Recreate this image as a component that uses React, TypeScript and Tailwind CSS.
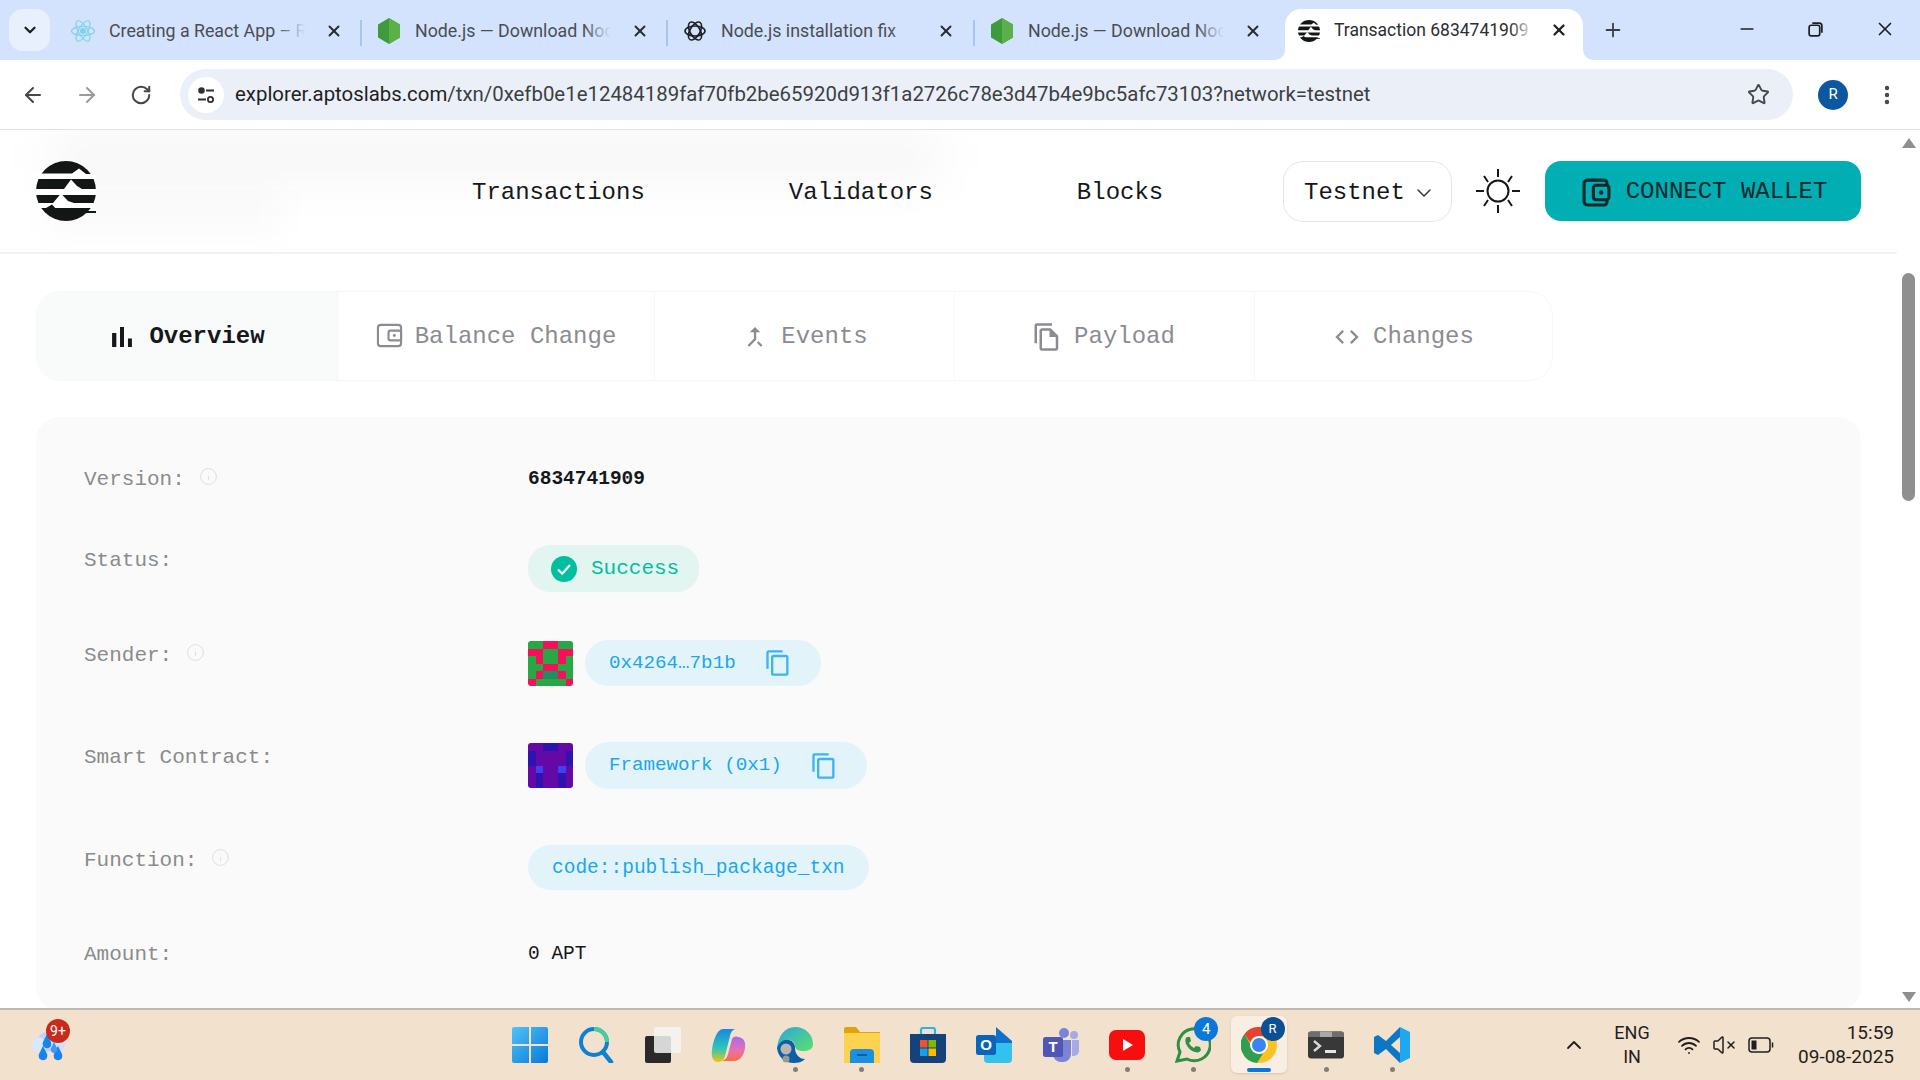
import React from 'react';
import { ArrowLeft, ArrowRight, RotateCw, Star, X, Plus, Minus, ChevronDown, ChevronUp, Info, EllipsisVertical, Wifi, VolumeX } from 'lucide-react';

const chromeFont = "font-['Roboto',sans-serif]";
const monoFont = "font-['Liberation_Mono',monospace]";

const AptosLogo = ({ className }: { className?: string }) => (
  <svg viewBox="0 0 60 60" className={className}>
    <circle cx="30" cy="30" r="30" fill="#121614" />
    <path d="M0 12.5H36L43 7.5L50 13H60V18H0z" fill="#fff" />
    <path d="M0 28H28L35 18.5L41 25L46 28H60V34H0z" fill="#fff" />
    <path d="M0 42H17L25 32.5L32 40L38 42H60V47H0z" fill="#fff" />
    <path d="M10 47L16 43.5L22 50H60V52H10z" fill="#121614" />
  </svg>
);

const NodeIcon = () => (
  <svg viewBox="0 0 24 26" className="h-[26px] w-6">
    <path d="M12 0l11 6.5v13L12 26 1 19.5v-13z" fill="#3f9a3c" />
    <path d="M12 0l11 6.5v13L12 26z" fill="#5cb04a" />
  </svg>
);

const ReactIcon = () => (
  <svg viewBox="0 0 26 26" className="h-[26px] w-[26px]" fill="none" stroke="#7fd3ea" strokeWidth="1.2">
    <ellipse cx="13" cy="13" rx="11.5" ry="4.5" />
    <ellipse cx="13" cy="13" rx="11.5" ry="4.5" transform="rotate(60 13 13)" />
    <ellipse cx="13" cy="13" rx="11.5" ry="4.5" transform="rotate(120 13 13)" />
    <circle cx="13" cy="13" r="2.4" fill="#7fd3ea" />
  </svg>
);

const GptIcon = () => (
  <svg viewBox="0 0 24 24" className="h-6 w-6" fill="none" stroke="#1f1f1f" strokeWidth="1.6">
    <ellipse cx="12" cy="12" rx="10" ry="5" />
    <ellipse cx="12" cy="12" rx="10" ry="5" transform="rotate(60 12 12)" />
    <ellipse cx="12" cy="12" rx="10" ry="5" transform="rotate(120 12 12)" />
  </svg>
);

const browserTabs = [
  { title: 'Creating a React App – React', icon: <ReactIcon />, w: 'w-[306px]', sep: true },
  { title: 'Node.js — Download Node.js', icon: <NodeIcon />, w: 'w-[306px]', sep: true },
  { title: 'Node.js installation fix', icon: <GptIcon />, w: 'w-[307px]', sep: true },
  { title: 'Node.js — Download Node.js', icon: <NodeIcon />, w: 'w-[310px]', sep: false },
];

const BrowserTab = ({ title, icon, w, sep }: { title: string; icon: React.ReactNode; w: string; sep: boolean }) => (
  <div className={`relative flex h-[44px] items-center pl-[14px] ${w}`}>
    <div className="flex w-[26px] shrink-0 justify-center">{icon}</div>
    <div className="relative ml-[13px] w-[196px] overflow-hidden whitespace-nowrap text-[17.8px] text-[#4a4d52]">
      {title}
      <div className="absolute inset-y-0 right-0 w-7 bg-gradient-to-r from-transparent to-[#d3e3fd]" />
    </div>
    <X size={18} strokeWidth={2.6} className="absolute left-[269px] text-[#2a2c30]" />
    {sep && <div className="absolute right-0 top-[11px] h-[26px] w-[2px] bg-[#a9c4ee]" />}
  </div>
);

const TabStrip = () => (
  <div className={`flex h-[60px] bg-[#d3e3fd] ${chromeFont}`}>
    <div className="ml-[9px] mt-[9px] flex h-[42px] w-[41px] items-center justify-center rounded-[14px] bg-[#e9f0fd]">
      <ChevronDown size={18} strokeWidth={3} className="text-[#1f1f1f]" />
    </div>
    <div className="ml-[6px] mt-[9px] flex">
      {browserTabs.map((t, i) => (
        <BrowserTab key={i} {...t} />
      ))}
    </div>
    <div className="relative mt-[9px] flex h-[51px] w-[298px] items-center rounded-t-[16px] bg-white pb-[8px] pl-[13px]">
      <svg viewBox="0 0 10 10" className="absolute bottom-0 left-[-10px] h-[10px] w-[10px]"><path d="M10 0V10H0A10 10 0 0 0 10 0z" fill="#fff" /></svg>
      <svg viewBox="0 0 10 10" className="absolute bottom-0 right-[-10px] h-[10px] w-[10px]"><path d="M0 0V10H10A10 10 0 0 1 0 0z" fill="#fff" /></svg>
      <AptosLogo className="h-[22px] w-[22px]" />
      <div className="relative ml-[14px] w-[200px] overflow-hidden whitespace-nowrap text-[17.5px] text-[#2c2e31]">
        Transaction 6834741909 (
        <div className="absolute inset-y-0 right-0 w-6 bg-gradient-to-r from-transparent to-white" />
      </div>
      <X size={18} strokeWidth={3} className="absolute left-[265px] top-[12px] text-[#1f1f1f]" />
    </div>
    <div className="ml-[19px] flex h-[60px] items-center">
      <Plus size={22} strokeWidth={2} className="text-[#3c3f43]" />
    </div>
    <div className="ml-auto flex h-[60px] items-center gap-[50px] pb-[2px] pr-[24px] text-[#1f1f1f]">
      <Minus size={20} strokeWidth={2} />
      <svg viewBox="0 0 16 16" className="h-[17px] w-[17px]" fill="none" stroke="#1f1f1f" strokeWidth="1.6">
        <rect x="2" y="4" width="10" height="10" rx="2" />
        <path d="M5 2h6.5A2.5 2.5 0 0 1 14 4.5V11" />
      </svg>
      <X size={22} strokeWidth={1.8} />
    </div>
  </div>
);

const Toolbar = () => (
  <div className={`flex h-[70px] items-center border-b border-[#e2e2e2] bg-white ${chromeFont}`}>
    <ArrowLeft size={24} strokeWidth={2} className="ml-[21px] text-[#474747]" />
    <ArrowRight size={24} strokeWidth={2} className="ml-[30px] text-[#9a9a9a]" />
    <RotateCw size={22} strokeWidth={2.2} className="ml-[31px] text-[#474747]" />
    <div className="ml-[28px] flex h-[51px] w-[1613px] items-center rounded-full bg-[#ebf0f8] pl-[8px]">
      <div className="flex h-9 w-9 items-center justify-center rounded-full bg-white">
        <svg viewBox="0 0 20 20" className="h-5 w-5" fill="none" stroke="#303030" strokeWidth="1.8">
          <circle cx="5.5" cy="5.5" r="2.4" fill="#303030" />
          <path d="M10 5.5h8M2 14.5h8" />
          <circle cx="14.5" cy="14.5" r="2.6" />
        </svg>
      </div>
      <span className="ml-[11px] whitespace-nowrap text-[20.4px] text-[#3c3f43]">
        <span className="text-[#1f1f1f]">explorer.aptoslabs.com</span>
        /txn/0xefb0e1e12484189faf70fb2be65920d913f1a2726c78e3d47b4e9bc5afc73103?network=testnet
      </span>
      <Star size={23} strokeWidth={2} className="ml-auto mr-[23px] text-[#474747]" />
    </div>
    <div className="ml-[25px] flex h-[30px] w-[30px] items-center justify-center rounded-full bg-[#0b57a0] text-[15px] text-white">R</div>
    <EllipsisVertical size={24} strokeWidth={2.4} className="ml-[27px] text-[#474747]" />
  </div>
);

const WalletIcon = () => (
  <svg viewBox="0 0 28 28" className="h-[29px] w-[29px]" fill="none" stroke="#05282b" strokeWidth="3">
    <path d="M24 7V4.5A2.5 2.5 0 0 0 21.5 2H5a3 3 0 0 0-3 3v18a3 3 0 0 0 3 3h16.5a2.5 2.5 0 0 0 2.5-2.5V21" />
    <rect x="11" y="7" width="15" height="14" rx="2.5" />
    <circle cx="18.5" cy="14" r="2.2" fill="#05282b" stroke="none" />
  </svg>
);

const SunIcon = () => (
  <svg viewBox="0 0 46 46" className="h-[46px] w-[46px]" fill="none" stroke="#14181b" strokeWidth="2">
    <circle cx="23" cy="23" r="10.5" />
    <path d="M23 1v8M23 37v8M1 23h8M37 23h8M9 8l4 6M37 8l-4 6M9 38l4-6M37 38l-4-6" />
  </svg>
);

const Navbar = () => (
  <div className={`relative flex h-[124px] items-center border-b-2 border-[#f1f1f1] pl-9 pr-[36px] text-[24px] text-[#14181b] ${monoFont}`}>
    {/* blurred leftovers behind the header */}
    <div className="pointer-events-none absolute left-[50px] top-[8px] h-[38px] w-[890px] bg-black/[0.045] blur-xl" />
    <div className="pointer-events-none absolute left-[50px] top-[60px] h-[45px] w-[230px] bg-black/[0.02] blur-lg" />
    <AptosLogo className="relative h-[60px] w-[60px] shrink-0" />
    <div className="relative ml-[376px] flex gap-[144px] pt-[3px]">
      <span>Transactions</span>
      <span>Validators</span>
      <span>Blocks</span>
    </div>
    <div className="relative ml-auto flex items-center">
      <div className="flex h-[61px] w-[169px] items-center rounded-[20px] border border-[#e6e6e6] pl-[20px] pt-[3px]">
        Testnet
        <ChevronDown size={24} strokeWidth={1.5} className="ml-[7px] text-[#33383b]" />
      </div>
      <div className="ml-[23px]">
        <SunIcon />
      </div>
      <div className="ml-[24px] flex h-[60px] w-[316px] items-center justify-center gap-[15px] rounded-2xl bg-[#00aeb3] pl-[3px] pt-[2px] text-[#05282b]">
        <WalletIcon />
        CONNECT WALLET
      </div>
    </div>
  </div>
);

const tabIcons: Record<string, string> = {
  bar: 'M5 9.2h3V19H5zM10.6 5h2.8v14h-2.8zm5.6 8H19v6h-2.8z',
  merge: 'M17 20.41 18.41 19 15 15.59 13.59 17 17 20.41zM7.5 8H11v5.59L5.59 19 7 20.41l6-6V8h3.5L12 3.5 7.5 8z',
  file: 'M16 1H4c-1.1 0-2 .9-2 2v14h2V3h12V1zm-1 4H8c-1.1 0-1.99.9-1.99 2L6 21c0 1.1.89 2 1.99 2H19c1.1 0 2-.9 2-2V11l-6-6zM8 21V7h6v5h5v9H8z',
  code: 'M9.4 16.6 4.8 12l4.6-4.6L8 6l-6 6 6 6 1.4-1.4zm5.2 0 4.6-4.6-4.6-4.6L16 6l6 6-6 6-1.4-1.4z',
};

const TabIcon = ({ d, className }: { d: string; className?: string }) => (
  <svg viewBox="0 0 24 24" className={className} fill="currentColor">
    <path d={d} />
  </svg>
);

const PageTabs = () => (
  <div className={`ml-9 mt-[37px] flex h-[90px] w-[1517px] rounded-3xl border border-[#f7f7f7] text-[24px] text-[#8b8b93] ${monoFont}`}>
    <div className="flex w-[300px] items-center justify-center gap-[10px] rounded-l-3xl bg-[#f9fafa] pr-[4px] pt-[2px] font-bold text-[#14181b]">
      <TabIcon d={tabIcons.bar} className="h-[34px] w-[34px]" />
      Overview
    </div>
    <div className="flex w-[317px] items-center justify-center gap-[12px] border-l border-[#f7f7f7] pt-[2px]">
      <svg viewBox="0 0 28 28" className="mb-[3px] h-[27px] w-[27px]" fill="none" stroke="currentColor" strokeWidth="2.2">
        <rect x="2" y="3" width="24" height="22" rx="3" />
        <rect x="13" y="9" width="13" height="10" rx="2" />
        <circle cx="19" cy="14" r="1.5" fill="currentColor" stroke="none" />
      </svg>
      Balance Change
    </div>
    <div className="flex w-[301px] items-center justify-center gap-[12px] border-x border-[#f7f7f7] pt-[2px]">
      <TabIcon d={tabIcons.merge} className="h-[28px] w-[28px]" />
      Events
    </div>
    <div className="flex w-[299px] items-center justify-center gap-[12px] pr-[2px] pt-[2px]">
      <TabIcon d={tabIcons.file} className="h-[30px] w-[30px]" />
      Payload
    </div>
    <div className="flex flex-1 items-center justify-center gap-[12px] border-l border-[#f7f7f7] pt-[2px]">
      <TabIcon d={tabIcons.code} className="h-[28px] w-[28px]" />
      Changes
    </div>
  </div>
);

const InfoDot = () => <Info size={19} strokeWidth={1.2} className="ml-[14px] mt-[-7px] text-[#dcdcdc]" />;

const CopyIcon = () => (
  <svg viewBox="0 0 24 24" className="h-[28px] w-[28px]" fill="#3db4f2">
    <path d="M16 1H4c-1.1 0-2 .9-2 2v14h2V3h12V1zm3 4H8c-1.1 0-2 .9-2 2v14c0 1.1.9 2 2 2h11c1.1 0 2-.9 2-2V7c0-1.1-.9-2-2-2zm0 16H8V7h11v14z" />
  </svg>
);

const senderCells = ['GGRRGG', 'RRGGRR', 'GRGGRG', 'GGRRGG', 'GRDDRG', 'RGGGGR'];
const contractCells = ['PPBBPP', 'BPPPPB', 'BPPPPB', 'PLPPLP', 'PBPPBP', 'PBPPBP'];
const cellColors: Record<string, string> = {
  G: '#27a844',
  R: '#f5105a',
  D: '#1f8f5f',
  P: '#6408a8',
  B: '#2d14b0',
  L: '#4040f0',
};

const Identicon = ({ cells }: { cells: string[] }) => (
  <svg viewBox="0 0 6 6" shapeRendering="crispEdges" className="h-[45px] w-[45px] shrink-0 rounded-[3px]">
    {cells.map((row, y) =>
      row.split('').map((c, x) => <rect key={`${x}-${y}`} x={x} y={y} width="1.02" height="1.02" fill={cellColors[c]} />)
    )}
  </svg>
);

const Pill = ({ text, className, copy }: { text: string; className: string; copy?: boolean }) => (
  <div className={`flex items-center rounded-full bg-[#e2f3fa] pl-[24px] text-[#1ba7ec] ${className}`}>
    {text}
    {copy && <span className="ml-auto mr-[29px]"><CopyIcon /></span>}
  </div>
);

const Row = ({ label, info, className, children }: { label: string; info?: boolean; className?: string; children: React.ReactNode }) => (
  <div className={`flex items-start ${className ?? ''}`}>
    <div className="flex h-[32px] w-[444px] shrink-0 items-center text-[21px] leading-7 text-[#8b8b8b]">
      {label}
      {info && <InfoDot />}
    </div>
    {children}
  </div>
);

const DetailsCard = () => (
  <div className={`ml-9 mr-[36px] mt-[36px] rounded-3xl bg-[#fafafa] pb-10 pl-12 pt-[47px] ${monoFont}`}>
    <Row label="Version:" info>
      <div className="pt-[1px] text-[19.5px] font-bold leading-7 text-[#14181b]">6834741909</div>
    </Row>
    <Row label="Status:" className="mt-[49px]">
      <div className="flex h-[47px] w-[171px] items-center gap-[14px] rounded-[22px] bg-[#e2f5f1] pl-[23px] text-[21px] text-[#00bf9f]">
        <svg viewBox="0 0 26 26" className="h-[26px] w-[26px]">
          <circle cx="13" cy="13" r="13" fill="#00bf9f" />
          <path d="M7 13.5l4.2 4.2L19 9" fill="none" stroke="#fff" strokeWidth="2.2" />
        </svg>
        Success
      </div>
    </Row>
    <Row label="Sender:" info className="mt-[48px]">
      <div className="flex items-center gap-[12px]">
        <Identicon cells={senderCells} />
        <Pill text="0x4264…7b1b" copy className="h-[46px] w-[236px] text-[19.2px]" />
      </div>
    </Row>
    <Row label="Smart Contract:" className="mt-[56px]">
      <div className="flex items-center gap-[12px]">
        <Identicon cells={contractCells} />
        <Pill text="Framework (0x1)" copy className="h-[47px] w-[282px] text-[19.2px]" />
      </div>
    </Row>
    <Row label="Function:" info className="mt-[56px]">
      <Pill text="code::publish_package_txn" className="h-[45px] w-[341px] pt-[2px] text-[19.5px]" />
    </Row>
    <Row label="Amount:" className="mt-[49px]">
      <div className="pt-[1px] text-[19.5px] leading-7 text-[#14181b]">0 APT</div>
    </Row>
  </div>
);

const Scrollbar = () => (
  <div className="flex w-[23px] shrink-0 flex-col items-center bg-white pt-[8px]">
    <svg viewBox="0 0 14 10" className="h-[10px] w-[14px]"><path d="M7 0l7 10H0z" fill="#8f8f8f" /></svg>
    <div className="mt-[125px] h-[228px] w-[13px] rounded-full bg-[#8f8f8f]" />
    <svg viewBox="0 0 14 10" className="mt-auto mb-[6px] h-[10px] w-[14px]"><path d="M7 10L14 0H0z" fill="#8f8f8f" /></svg>
  </div>
);

const Badge = ({ text, className }: { text: string; className: string }) => (
  <div className={`absolute flex items-center justify-center rounded-full text-white ${className}`}>{text}</div>
);

const WeatherIcon = () => (
  <svg viewBox="0 0 38 42" className="h-[42px] w-[38px]">
    <circle cx="17" cy="18" r="10" fill="#b9d6f7" />
    <circle cx="27" cy="19" r="8.5" fill="#cfe2f9" />
    <circle cx="9" cy="21" r="7.5" fill="#d9e8fa" />
    <path d="M17 10l4 8a4.4 4.4 0 1 1-8 0z" fill="#1683f0" />
    <path d="M13 22l4 8a4.4 4.4 0 1 1-8 0z" fill="#1683f0" />
    <path d="M28 22l4 8a4.4 4.4 0 1 1-8 0z" fill="#1683f0" />
    <path d="M24 18l3 6a3.4 3.4 0 1 1-6 0z" fill="#3d9af5" />
  </svg>
);

const taskIcons: React.ReactNode[] = [
  <svg viewBox="0 0 36 36" className="h-9 w-9" key="start">
    <defs>
      <linearGradient id="winGrad" x1="0" y1="0" x2="1" y2="1">
        <stop offset="0" stopColor="#4fc3f7" />
        <stop offset="1" stopColor="#0a78d8" />
      </linearGradient>
    </defs>
    <path d="M0 2a2 2 0 0 1 2-2h15v17H0zM19 0h15a2 2 0 0 1 2 2v15H19zM0 19h17v17H2a2 2 0 0 1-2-2zM19 19h17v15a2 2 0 0 1-2 2H19z" fill="url(#winGrad)" />
  </svg>,
  <svg viewBox="0 0 36 36" className="h-9 w-9" fill="none" key="search">
    <circle cx="16" cy="15" r="13" stroke="#0f7fd1" strokeWidth="4" />
    <path d="M16 2a13 13 0 0 1 13 13" stroke="#43d09a" strokeWidth="4" />
    <path d="M25 25l8 10" stroke="#0f7fd1" strokeWidth="4.5" strokeLinecap="round" />
  </svg>,
  <svg viewBox="0 0 36 36" className="h-9 w-9" key="taskview">
    <rect x="0" y="9" width="26" height="27" rx="2" fill="#2a2a2a" />
    <rect x="9" y="0" width="27" height="26" rx="2" fill="#f4f4f4" fillOpacity="0.85" />
  </svg>,
  <svg viewBox="0 0 36 36" className="h-9 w-9" key="copilot">
    <defs>
      <linearGradient id="copA" x1="0" y1="0" x2="0" y2="1">
        <stop offset="0" stopColor="#1a86e8" />
        <stop offset="0.6" stopColor="#2fc7b5" />
        <stop offset="1" stopColor="#f4c20d" />
      </linearGradient>
      <linearGradient id="copB" x1="0" y1="0" x2="0" y2="1">
        <stop offset="0" stopColor="#a76ce8" />
        <stop offset="0.6" stopColor="#ea6fb0" />
        <stop offset="1" stopColor="#f7713d" />
      </linearGradient>
    </defs>
    <path d="M12 2h12c-3 1-4 3-5 7l-5 20c-1 4-4 6-8 6-4-1-6-5-5-12 1-9 5-21 11-21z" fill="url(#copA)" />
    <path d="M23 34H11c3-1 5-3 6-7l4-15c1-2 3-3 6-2 6 1 8 5 7 11-1 7-5 13-11 13z" fill="url(#copB)" />
  </svg>,
  <svg viewBox="0 0 36 36" className="h-9 w-9" key="edge">
    <defs>
      <linearGradient id="edgeG" x1="0" y1="0" x2="1" y2="1">
        <stop offset="0" stopColor="#2aa7de" />
        <stop offset="1" stopColor="#5ce06a" />
      </linearGradient>
    </defs>
    <path d="M18 0c11 0 18 8 18 17 0 5-4 7-9 7-6 0-9-2-9-5 0-4-4-7-9-6-4 1-8 4-9 8C1 9 8 0 18 0z" fill="url(#edgeG)" />
    <path d="M0 21c2-6 7-9 12-8 4 1 6 4 6 8 0 6 4 11 10 11-3 3-7 4-11 4C8 36 1 30 0 21z" fill="#0c5ea8" />
    <circle cx="9" cy="22" r="5.5" fill="#b9b6b2" />
    <circle cx="9" cy="32" r="3.5" fill="#9c9894" />
  </svg>,
  <svg viewBox="0 0 36 36" className="h-9 w-9" key="files">
    <path d="M0 2a2 2 0 0 1 2-2h10l4 5h20v31H0z" fill="#e0a30b" />
    <rect x="0" y="6" width="36" height="30" fill="#fdd24e" />
    <path d="M6 26a4 4 0 0 1 4-4h16a4 4 0 0 1 4 4v10H6z" fill="#1c8fe0" />
    <rect x="13" y="27" width="10" height="2" fill="#0b5fa8" />
  </svg>,
  <svg viewBox="0 0 36 36" className="h-9 w-9" key="store">
    <path d="M11 8V3a2 2 0 0 1 2-2h10a2 2 0 0 1 2 2v5" fill="none" stroke="#28b4e8" strokeWidth="2.2" />
    <path d="M0 7h36v25a4 4 0 0 1-4 4H4a4 4 0 0 1-4-4z" fill="#16427c" />
    <rect x="10" y="13" width="7.5" height="7.5" fill="#ee5427" />
    <rect x="18.5" y="13" width="7.5" height="7.5" fill="#7fba00" />
    <rect x="10" y="21.5" width="7.5" height="7.5" fill="#15a0ea" />
    <rect x="18.5" y="21.5" width="7.5" height="7.5" fill="#ffb900" />
  </svg>,
  <svg viewBox="0 0 36 36" className="h-9 w-9" key="outlook">
    <path d="M20 0l16 14v8l-16 10z" fill="#1170c9" />
    <path d="M8 16l28 0v16a4 4 0 0 1-4 4H12a4 4 0 0 1-4-4z" fill="#33c2ee" />
    <rect x="0" y="8" width="20" height="20" rx="2.5" fill="#0c64b8" />
    <text x="10" y="23" textAnchor="middle" fill="#fff" fontSize="15" fontFamily="Liberation Sans, sans-serif" fontWeight="700">O</text>
  </svg>,
  <svg viewBox="0 0 36 36" className="h-9 w-9" key="teams">
    <circle cx="21" cy="6" r="5" fill="#7b83d6" />
    <circle cx="31" cy="8" r="4" fill="#a6abe8" />
    <path d="M10 13h18v14a8 8 0 0 1-8 8h-2a8 8 0 0 1-8-8z" fill="#7b83d6" />
    <path d="M29 13h7v11a5 5 0 0 1-5 5h-2z" fill="#a6abe8" />
    <rect x="0" y="10" width="20" height="20" rx="2.5" fill="#4f56b5" />
    <text x="10" y="25" textAnchor="middle" fill="#fff" fontSize="15" fontFamily="Liberation Sans, sans-serif" fontWeight="700">T</text>
  </svg>,
  <svg viewBox="0 0 36 36" className="h-9 w-9" key="youtube">
    <rect x="0" y="3" width="36" height="30" rx="7" fill="#f70f0f" />
    <path d="M14 12l10 6-10 6z" fill="#fff" />
  </svg>,
  <svg viewBox="0 0 36 36" className="h-9 w-9" fill="none" key="whatsapp">
    <path d="M2 34l3-9A16 16 0 1 1 12 32z" stroke="#2f8f46" strokeWidth="3" />
    <path d="M12 10c-2 1-2 4-1 7 2 4 5 7 9 8 3 1 5 0 6-2l-1-3-4-1-2 2c-2-1-4-3-5-5l2-2-1-4z" fill="#2f8f46" />
  </svg>,
  <svg viewBox="0 0 36 36" className="h-9 w-9" key="chrome">
    <circle cx="18" cy="18" r="18" fill="#f7c325" />
    <path d="M18 0a18 18 0 0 1 15.6 9H18a9 9 0 0 0-8.6 6.4L3.5 7A18 18 0 0 1 18 0z" fill="#e5432f" />
    <path d="M3.5 7l8.2 14.4A9 9 0 0 0 22 26.5L16 36A18 18 0 0 1 3.5 7z" fill="#2f9e4f" />
    <circle cx="18" cy="18" r="9" fill="#fff" />
    <circle cx="18" cy="18" r="7" fill="#3c82f0" />
  </svg>,
  <svg viewBox="0 0 36 36" className="h-9 w-9" key="terminal">
    <rect x="0" y="4.5" width="36" height="27" rx="3" fill="#383838" />
    <path d="M3 4.5h30a3 3 0 0 1 3 3v2.5H0V7.5a3 3 0 0 1 3-3z" fill="#6e6e6e" />
    <rect x="12" y="4.5" width="12" height="5.500" fill="#a8a8a8" />
    <path d="M6 14l6 5-6 5" fill="none" stroke="#d8d8d8" strokeWidth="2.4" />
    <rect x="17" y="23" width="11" height="3" fill="#e6e6e6" />
  </svg>,
  <svg viewBox="0 0 36 36" className="h-9 w-9" key="vscode">
    <path d="M26 0v10l-9 8 9 8v10L12 22l-8 6-4-2V10l4-2 8 6z" fill="#0c78c4" />
    <path d="M26 0l10 5v26l-10 5z" fill="#1fa8f0" />
  </svg>,
];

const openApps = [false, false, false, false, true, true, false, false, false, true, true, false, true, true];

const TaskItem = ({ index, icon }: { index: number; icon: React.ReactNode }) => (
  <div className="relative flex h-full w-[66.3px] items-center justify-center">
    {index === 11 && <div className="absolute left-[5px] top-[6px] h-[57px] w-[56px] rounded-md bg-white/45 shadow-sm" />}
    <div className="relative">{icon}</div>
    {openApps[index] && <div className="absolute bottom-[8px] left-[31px] h-[5px] w-[5px] rounded-full bg-[#847e76]" />}
    {index === 11 && <div className="absolute bottom-[8px] left-[21px] h-[4px] w-[24px] rounded-full bg-[#0a78d8]" />}
    {index === 10 && <Badge text="4" className="right-[8px] top-[7px] h-[24px] w-[24px] bg-[#0a78d8] text-[15px]" />}
    {index === 11 && <Badge text="R" className="right-[8px] top-[7px] h-[24px] w-[24px] bg-[#0b4f94] text-[13px]" />}
  </div>
);

const Taskbar = () => (
  <div className={`flex h-[72px] shrink-0 items-center border-t-2 border-[#c0b8ae] bg-[#f2e1cd] ${chromeFont}`}>
    <div className="relative ml-[30px] w-[37px]">
      <WeatherIcon />
      <Badge text="9+" className="left-[16px] top-[-5px] h-[24px] w-[24px] bg-[#c82a1c] text-[14px]" />
    </div>
    <div className="ml-[430px] flex h-full">
      {taskIcons.map((icon, i) => (
        <TaskItem key={i} index={i} icon={icon} />
      ))}
    </div>
    <div className="ml-auto flex items-center pr-[26px] text-[#1f1f1f]">
      <ChevronUp size={24} strokeWidth={1.8} />
      <div className="ml-[21px] w-[50px] text-center text-[18px] leading-[24px]">
        <div>ENG</div>
        <div>IN</div>
      </div>
      <Wifi size={24} strokeWidth={1.8} className="ml-[20px]" />
      <VolumeX size={24} strokeWidth={1.5} className="ml-[11px]" />
      <svg viewBox="0 0 26 16" className="ml-[12px] h-4 w-[26px]" fill="none" stroke="#1f1f1f" strokeWidth="1.5">
        <rect x="1" y="1" width="21" height="14" rx="3" />
        <rect x="3.5" y="3.5" width="5" height="9" fill="#1f1f1f" stroke="none" />
        <path d="M24.5 5.5v5" />
      </svg>
      <div className="ml-[14px] w-[106px] text-right text-[19px] leading-[24px]">
        <div>15:59</div>
        <div>09-08-2025</div>
      </div>
    </div>
  </div>
);

export default function App() {
  return (
    <div className="flex h-screen w-screen flex-col overflow-hidden bg-white">
      <TabStrip />
      <Toolbar />
      <div className="flex min-h-0 flex-1">
        <div className="min-w-0 flex-1 overflow-hidden">
          <Navbar />
          <PageTabs />
          <DetailsCard />
        </div>
        <Scrollbar />
      </div>
      <Taskbar />
    </div>
  );
}
